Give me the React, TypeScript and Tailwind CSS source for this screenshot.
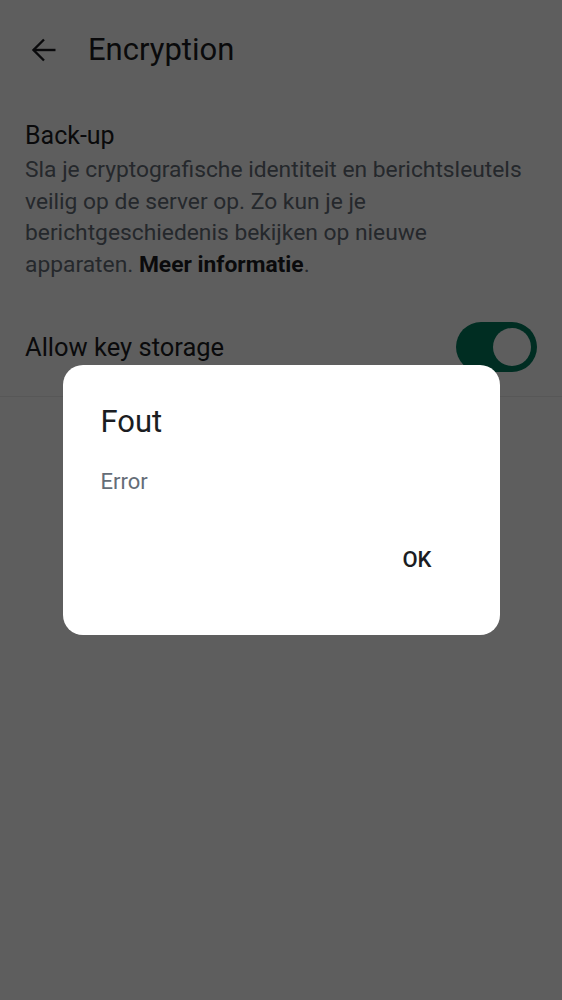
export default function App() {
  return (
    <div className="relative h-[1000px] w-full overflow-hidden bg-white font-['Roboto',sans-serif]">
      {/* header */}
      <div className="flex h-[100px] items-center">
        <button className="ml-[31px] flex h-[26px] w-[26px] items-center justify-center text-[#1b1d22]">
          <svg width="26" height="26" viewBox="0 0 26 26" fill="none" stroke="currentColor" strokeWidth="2.4">
            <path d="M24.5 13H2.5" />
            <path d="M13 2.5L2.5 13L13 23.5" />
          </svg>
        </button>
        <h1 className="ml-[31px] text-[31px] leading-[36px] text-[#1b1d22]">Encryption</h1>
      </div>

      {/* back-up section */}
      <div className="px-[25px] pt-[21px]">
        <div className="text-[25px] leading-[30px] text-[#1b1d22]">Back-up</div>
        <p className="mt-[3px] text-[22.8px] leading-[31.5px] text-[#656d77]">
          Sla je cryptografische identiteit en berichtsleutels veilig op de server op. Zo kun je je
          berichtgeschiedenis bekijken op nieuwe apparaten.{" "}
          <span className="font-bold text-[#1b1d22]">Meer informatie</span>.
        </p>
      </div>

      {/* toggle row */}
      <div className="mt-[42px] flex items-center justify-between border-b border-[#ebebeb] pb-[24px] pl-[25px] pr-[25px]">
        <span className="text-[25.5px] leading-[30px] text-[#1b1d22]">Allow key storage</span>
        <div className="flex h-[50px] w-[81px] items-center justify-end rounded-full bg-[#007a5e] pr-[6px]">
          <div className="h-[38px] w-[38px] rounded-full bg-white" />
        </div>
      </div>

      {/* scrim + dialog */}
      <div className="absolute inset-0 flex items-center justify-center bg-black/[0.63]">
        <div className="flex h-[270px] w-[437px] flex-col rounded-[20px] bg-white pl-[38px] pr-[68px] pt-[37px]">
          <h2 className="text-[31px] leading-[40px] text-[#1b1d22]">Fout</h2>
          <p className="mt-[26px] text-[22px] leading-[28px] text-[#656d77]">Error</p>
          <div className="mt-[50px] flex justify-end">
            <button className="text-[22px] font-medium leading-[28px] text-[#1b1d22]">OK</button>
          </div>
        </div>
      </div>
    </div>
  );
}
